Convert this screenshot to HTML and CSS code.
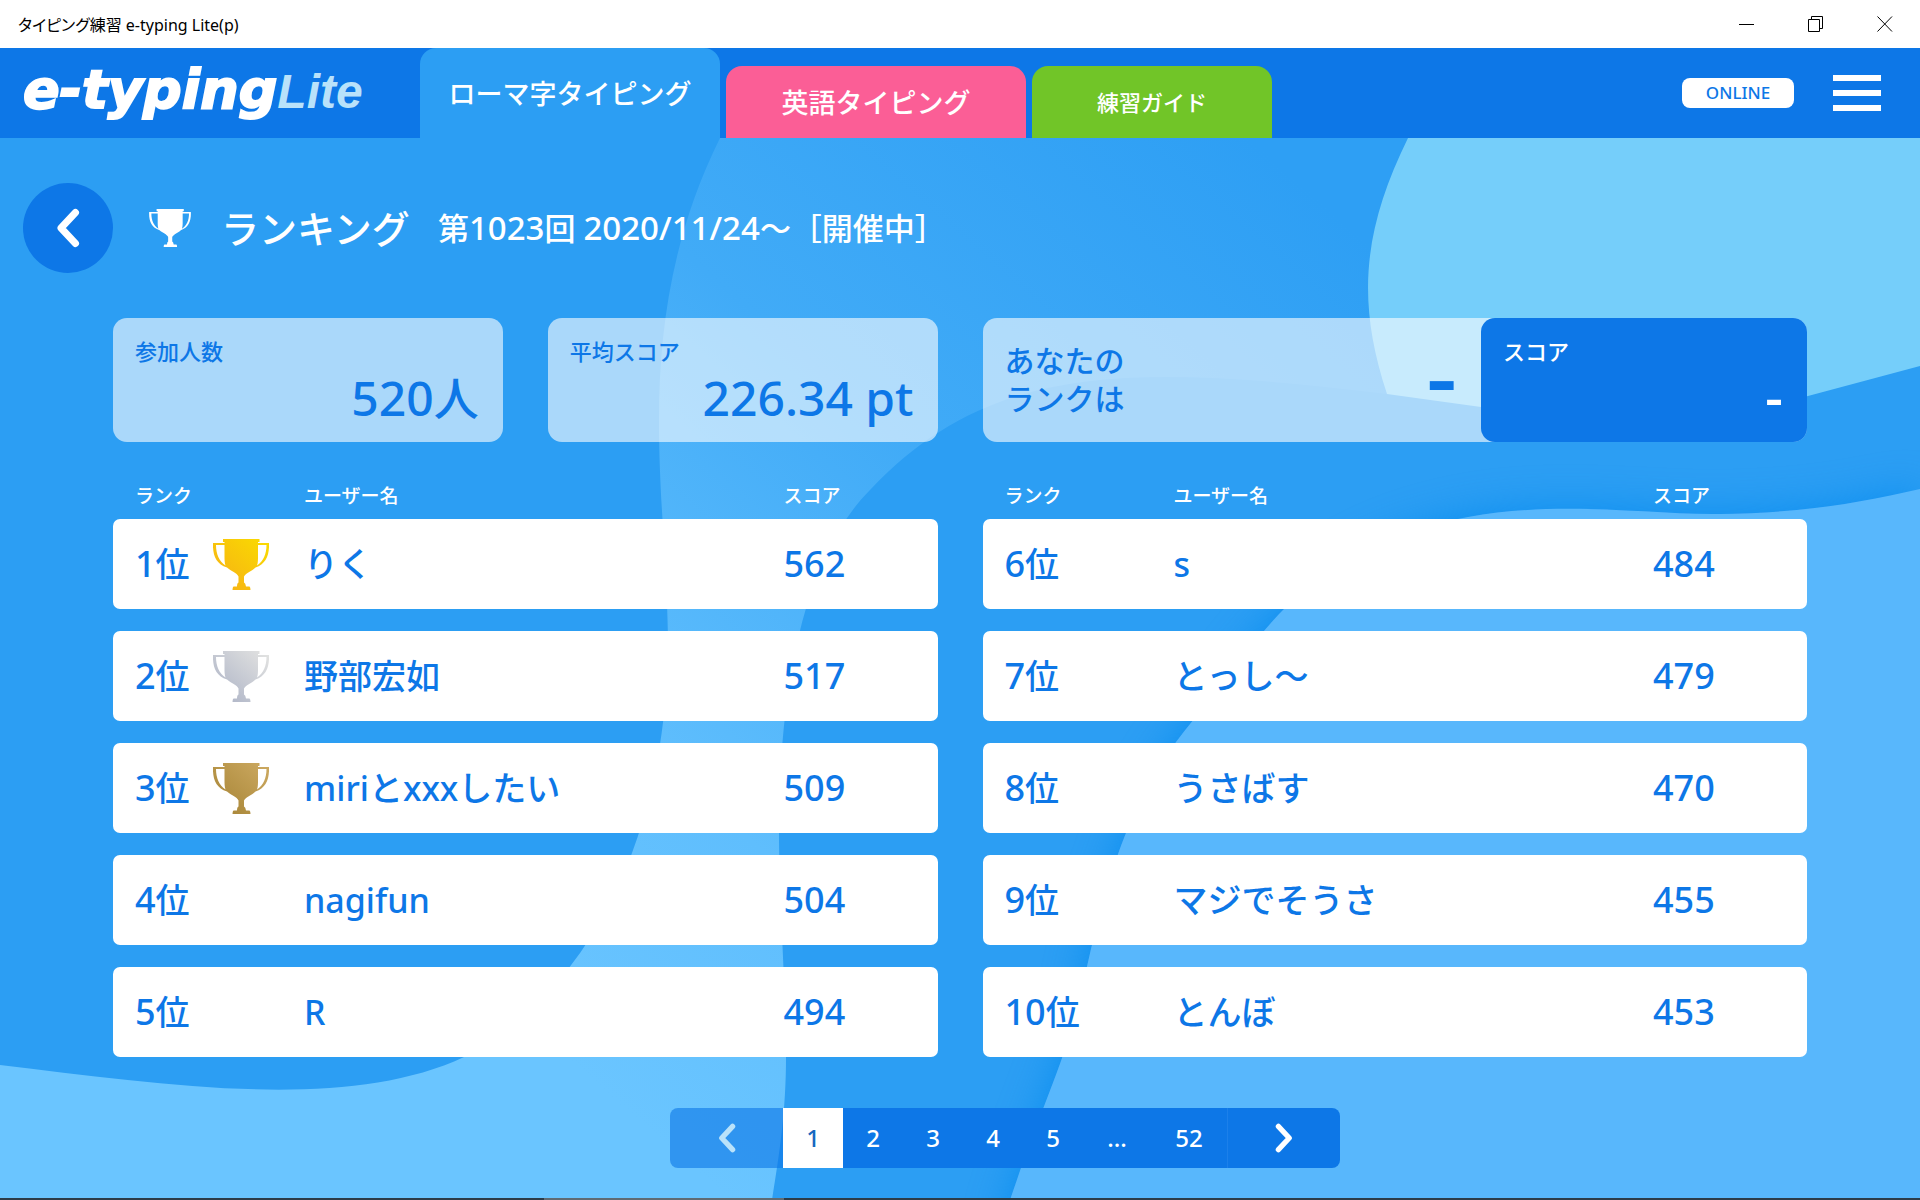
FILE: index.html
```html
<!DOCTYPE html>
<html lang="ja">
<head>
<meta charset="utf-8">
<meta name="viewport" content="width=device-width, initial-scale=1">
<title>タイピング練習 e-typing Lite(p)</title>
<link rel="stylesheet" href="styles.css">
</head>
<body>
<svg class="defs" aria-hidden="true">
  <defs>
    <linearGradient id="gold" x1="1" y1="0" x2="0" y2="1"><stop offset="0" stop-color="#fadc00"/><stop offset="1" stop-color="#f6ae17"/></linearGradient>
    <linearGradient id="silver" x1="1" y1="0" x2="0" y2="1"><stop offset="0" stop-color="#e4e4e2"/><stop offset="1" stop-color="#a9b0c4"/></linearGradient>
    <linearGradient id="bronze" x1="1" y1="0" x2="0" y2="1"><stop offset="0" stop-color="#cdaa62"/><stop offset="1" stop-color="#a48233"/></linearGradient>
    <symbol id="trophy" viewBox="0 0 56 51">
      <path fill-rule="evenodd" d="M10 0H46.500V3H45V4H56C56.500 16 53 25 42.500 28.500C39 32 33 34 31 37.500V43.500Q32.500 44 33 47.500H36.500Q37.500 48 37.500 51H19.500Q19.500 48 20.500 47.500H24Q24 44 25.500 43.500V37.500C24 34 18 32 14 28.500C3 25 -.5 16 0 4H11.500V3H10ZM11.500 6H3C3 15 6 22 12.500 26.500C11.500 24 11.500 20 11.500 18ZM45 6V18C45 20 45 24 44 26.500C50.500 22 53.500 15 53.500 6Z"/>
    </symbol>
    <symbol id="chevron-left" viewBox="0 0 24 40">
      <path d="M19.500 4.500L5 20L19.500 35.500" fill="none" stroke="currentColor" stroke-width="7" stroke-linecap="round" stroke-linejoin="round"/>
    </symbol>
    <symbol id="chevron-right" viewBox="0 0 24 40">
      <path d="M4.500 4.500L19 20L4.500 35.500" fill="none" stroke="currentColor" stroke-width="7" stroke-linecap="round" stroke-linejoin="round"/>
    </symbol>
  </defs>
</svg>

<div class="titlebar">
  <span class="titlebar-text">タイピング練習 e-typing Lite(p)</span>
  <div class="window-controls">
    <button type="button" aria-label="最小化"><svg width="16" height="16"><path d="M0 8.500H15"/></svg></button>
    <button type="button" aria-label="元に戻す"><svg width="16" height="16"><path d="M.5 3.500H11.500V15.500H.5ZM3.500 3.500V.5H14.500V12.500H11.500"/></svg></button>
    <button type="button" aria-label="閉じる"><svg width="16" height="16"><path d="M.5 .5L15 15.500M15 .5L.5 15.500"/></svg></button>
  </div>
</div>

<header class="header">
  <a class="logo" href="#"><span class="logo-main">e-typing</span><span class="logo-lite">Lite</span></a>
  <nav class="tabs">
    <a class="tab tab-romaji" href="#">ローマ字タイピング</a>
    <a class="tab tab-english" href="#">英語タイピング</a>
    <a class="tab tab-guide" href="#">練習ガイド</a>
  </nav>
  <div class="header-tools">
    <span class="online">ONLINE</span>
    <button class="menu" type="button" aria-label="メニュー"><span></span><span></span><span></span></button>
  </div>
</header>

<main class="main">
  <svg class="backdrop" viewBox="0 138 1920 1062" preserveAspectRatio="none" aria-hidden="true">
    <defs>
      <linearGradient id="wave" gradientUnits="userSpaceOnUse" x1="500" y1="1000" x2="1250" y2="140">
        <stop offset="0" stop-color="#6ac5ff"/><stop offset=".25" stop-color="#5fbefd"/><stop offset=".6" stop-color="#41abf7"/><stop offset="1" stop-color="#2e9ff4"/>
      </linearGradient>
      <filter id="soft" x="-20%" y="-20%" width="140%" height="140%"><feGaussianBlur stdDeviation="20"/></filter>
    </defs>
    <path fill="url(#wave)" d="M720 138C672 235 659 330 659 420C659 500 667 560 668 640C668 820 600 985 464 1057C345 1113 160 1084 0 1065V1200H772C780 1150 786 1110 786 1057C786 990 779 900 779 832C779 700 800 560 870 490C950 405 1040 377 1165 377C1240 377 1310 385 1387 394L1480 138Z"/>
    <path fill="#75cefa" d="M1408 138C1363 230 1356 300 1387 394L1481 407C1600 428 1720 422 1808 396L1920 366V138Z"/>
    <path fill="#1089ee" opacity=".75" filter="url(#soft)" d="M1010 1200C1040 1110 1070 1050 1083 985C1110 860 1135 790 1194 719C1225 680 1262 630 1286 607C1340 555 1400 530 1468 517C1560 500 1650 515 1720 514C1800 513 1860 503 1920 489V1240H1000Z"/>
    <path fill="#58b7fc" d="M1010 1200C1040 1110 1070 1050 1083 985C1110 860 1135 790 1194 719C1225 680 1262 630 1286 607C1340 555 1400 530 1468 517C1560 500 1650 515 1720 514C1800 513 1860 503 1920 489V1200Z"/>
  </svg>

  <div class="heading">
    <a class="back" href="#" aria-label="戻る"><svg width="24" height="40"><use href="#chevron-left"/></svg></a>
    <svg class="heading-trophy" width="42" height="38"><use href="#trophy"/></svg>
    <h1>ランキング</h1>
    <p class="period">第<b>1023</b>回 <b>2020/11/24</b>～［開催中］</p>
  </div>

  <div class="content">
    <section class="summary">
      <div class="pair">
        <div class="card"><h2>参加人数</h2><p class="figure"><b>520</b>人</p></div>
        <div class="card"><h2>平均スコア</h2><p class="figure"><b>226.34 pt</b></p></div>
      </div>
      <div class="mine">
        <p class="mine-label">あなたの<br>ランクは</p>
        <p class="mine-rank">-</p>
        <div class="card card-score"><h2>スコア</h2><p class="figure figure-none">-</p></div>
      </div>
    </section>

    <section class="boards">
      <table class="board">
        <thead><tr><th>ランク</th><th>ユーザー名</th><th>スコア</th></tr></thead>
        <tbody>
          <tr><td class="rank"><span><b>1</b>位</span><svg class="cup" fill="url(#gold)"><use href="#trophy"/></svg></td><td>りく</td><td><b>562</b></td></tr>
          <tr><td class="rank"><span><b>2</b>位</span><svg class="cup" fill="url(#silver)"><use href="#trophy"/></svg></td><td>野部宏如</td><td><b>517</b></td></tr>
          <tr><td class="rank"><span><b>3</b>位</span><svg class="cup" fill="url(#bronze)"><use href="#trophy"/></svg></td><td>miriとxxxしたい</td><td><b>509</b></td></tr>
          <tr><td class="rank"><span><b>4</b>位</span></td><td>nagifun</td><td><b>504</b></td></tr>
          <tr><td class="rank"><span><b>5</b>位</span></td><td>R</td><td><b>494</b></td></tr>
        </tbody>
      </table>
      <table class="board">
        <thead><tr><th>ランク</th><th>ユーザー名</th><th>スコア</th></tr></thead>
        <tbody>
          <tr><td class="rank"><span><b>6</b>位</span></td><td>s</td><td><b>484</b></td></tr>
          <tr><td class="rank"><span><b>7</b>位</span></td><td>とっし～</td><td><b>479</b></td></tr>
          <tr><td class="rank"><span><b>8</b>位</span></td><td>うさばす</td><td><b>470</b></td></tr>
          <tr><td class="rank"><span><b>9</b>位</span></td><td>マジでそうさ</td><td><b>455</b></td></tr>
          <tr><td class="rank"><span><b>10</b>位</span></td><td>とんぼ</td><td><b>453</b></td></tr>
        </tbody>
      </table>
    </section>

    <nav class="pager" aria-label="ページ">
      <button class="step prev" type="button" disabled aria-label="前へ"><svg width="18" height="30"><use href="#chevron-left"/></svg></button>
      <a class="page current" href="#">1</a>
      <a class="page" href="#">2</a>
      <a class="page" href="#">3</a>
      <a class="page" href="#">4</a>
      <a class="page" href="#">5</a>
      <span class="page more">...</span>
      <a class="page last" href="#">52</a>
      <button class="step next" type="button" aria-label="次へ"><svg width="18" height="30"><use href="#chevron-right"/></svg></button>
    </nav>
  </div>
</main>
<div class="taskbar"></div>
</body>
</html>
```
FILE: styles.css
```css
:root {
  --blue: #0d77e7;
  --sky: #2c9ef3;
}

* { box-sizing: border-box; }

body {
  margin: 0;
  min-height: 100vh;
  display: flex;
  flex-direction: column;
  background: var(--sky);
  color: #fff;
  font-family: "Noto Sans", "Noto Sans CJK JP", sans-serif;
  font-weight: 500;
}

h1, h2, p { margin: 0; font-weight: 500; }
b { font-weight: 500; }
a { color: inherit; text-decoration: none; }
button { border: 0; padding: 0; background: none; font: inherit; color: inherit; }
svg { display: block; }
.defs { position: absolute; width: 0; height: 0; }

/* Window title bar */
.titlebar {
  display: flex;
  align-items: center;
  justify-content: space-between;
  height: 48px;
  padding: 0 1px 0 18px;
  background: #fff;
  color: #000;
}
.titlebar-text {
  font-size: 16px;
  font-weight: 400;
  font-feature-settings: "palt";
}
.window-controls { display: flex; }
.window-controls button {
  display: grid;
  place-items: center;
  width: 69px;
  height: 48px;
}
.window-controls path { fill: none; stroke: #000; }

/* Header */
.header {
  display: flex;
  height: 90px;
  background: var(--blue);
}
.logo {
  display: flex;
  align-items: baseline;
  flex: 0 0 420px;
  padding: 13px 0 0 23px;
  line-height: 58px;
  font-style: italic;
  font-weight: 700;
}
.logo-main {
  font-family: "DejaVu Sans", sans-serif;
  font-size: 54px;
  -webkit-text-stroke: 2px #fff;
}
.logo-lite {
  font-family: "Liberation Sans", sans-serif;
  font-size: 48px;
  color: #b9e2fa;
}
.tabs { display: flex; align-items: flex-end; gap: 6px; }
.tab {
  display: grid;
  place-items: center;
  width: 300px;
  height: 72px;
  padding-bottom: 2px;
  border-radius: 16px 16px 0 0;
  font-size: 27px;
}
.tab-romaji { height: 90px; background: var(--sky); }
.tab-english { background: #fb5e96; }
.tab-guide { width: 240px; background: #71c528; font-size: 22px; }
.header-tools {
  display: flex;
  align-items: center;
  gap: 39px;
  margin-left: auto;
  padding-right: 39px;
}
.online {
  width: 112px;
  border-radius: 8px;
  background: #fff;
  color: var(--blue);
  font-size: 17px;
  line-height: 30px;
  text-align: center;
}
.menu { display: grid; gap: 9px; width: 48px; }
.menu span { height: 6px; background: #fff; }

/* Page */
.main {
  position: relative;
  z-index: 0;
  flex: 1;
  padding: 45px 0 31px;
}
.backdrop {
  position: absolute;
  inset: 0;
  z-index: -1;
  width: 100%;
  height: 100%;
}
.heading {
  display: flex;
  align-items: center;
  padding-left: 23px;
}
.back {
  display: grid;
  place-items: center;
  width: 90px;
  height: 90px;
  border-radius: 50%;
  background: var(--blue);
}
.heading-trophy { margin: 0 30px 0 36px; fill: #fff; }
.heading h1 { font-size: 38px; line-height: 48px; }
.period { margin-left: 28px; font-size: 31px; line-height: 48px; }
.period b { font-size: 33px; }
.content { padding: 45px 113px 0; }

/* Summary cards */
.summary, .boards, .pair {
  display: grid;
  grid-template-columns: 1fr 1fr;
  gap: 45px;
}
.card, .mine {
  height: 124px;
  border-radius: 14px;
  background: rgba(255, 255, 255, .6);
  color: var(--blue);
}
.card { padding: 16px 24px 0 22px; }
.card h2 { font-size: 22px; line-height: 34px; }
.figure {
  font-size: 45px;
  line-height: 60px;
  text-align: right;
}
.figure b { font-size: 48px; }
.mine { display: flex; align-items: center; padding-left: 22px; }
.mine-label { font-size: 30px; line-height: 38px; }
.mine-rank {
  margin-left: auto;
  padding: 0 24px 12px 0;
  font-size: 96px;
  line-height: 96px;
}
.card-score {
  width: 326px;
  background: var(--blue);
  color: #fff;
}
.figure-none { font-size: 56px; line-height: 56px; }

/* Ranking tables */
.boards { margin-top: 30px; }
.board, .board tbody { display: grid; }
.board tbody { gap: 22px; }
.board thead { padding-top: 1px; }
.board tr {
  display: grid;
  grid-template-columns: 169px 1fr 132px;
  align-items: center;
  padding: 0 22px;
}
.board th, .board td { padding: 0; text-align: left; }
.board th { font-size: 19px; line-height: 46px; font-weight: 500; }
.board tbody tr {
  height: 90px;
  border-radius: 7px;
  background: #fff;
  color: var(--blue);
  font-size: 34px;
  line-height: 48px;
}
.board b { font-size: 36px; }
.board .rank { display: flex; align-items: center; }
.rank span { min-width: 78px; }
.cup { width: 56px; height: 51px; }

/* Pager */
.pager {
  display: flex;
  justify-content: center;
  margin-top: 51px;
  padding-left: 90px;
}
.step {
  display: grid;
  place-items: center;
  width: 113px;
  height: 60px;
  background: var(--blue);
}
.prev { border-radius: 8px 0 0 8px; background: rgba(13, 119, 231, .62); color: #b9e2fa; }
.next { border-radius: 0 8px 8px 0; border-left: 1px solid #1c80ea; }
.page {
  width: 60px;
  background: var(--blue);
  font-size: 24px;
  line-height: 60px;
  text-align: center;
}
.current { background: #fff; color: #1668c0; }
.more { width: 68px; }
.last { width: 76px; }

.taskbar {
  position: fixed;
  inset: auto 0 0;
  height: 2px;
  background: linear-gradient(90deg, #2c3c49 544px, #5f6b74 544px 784px, #2c3c49 784px);
}
```
